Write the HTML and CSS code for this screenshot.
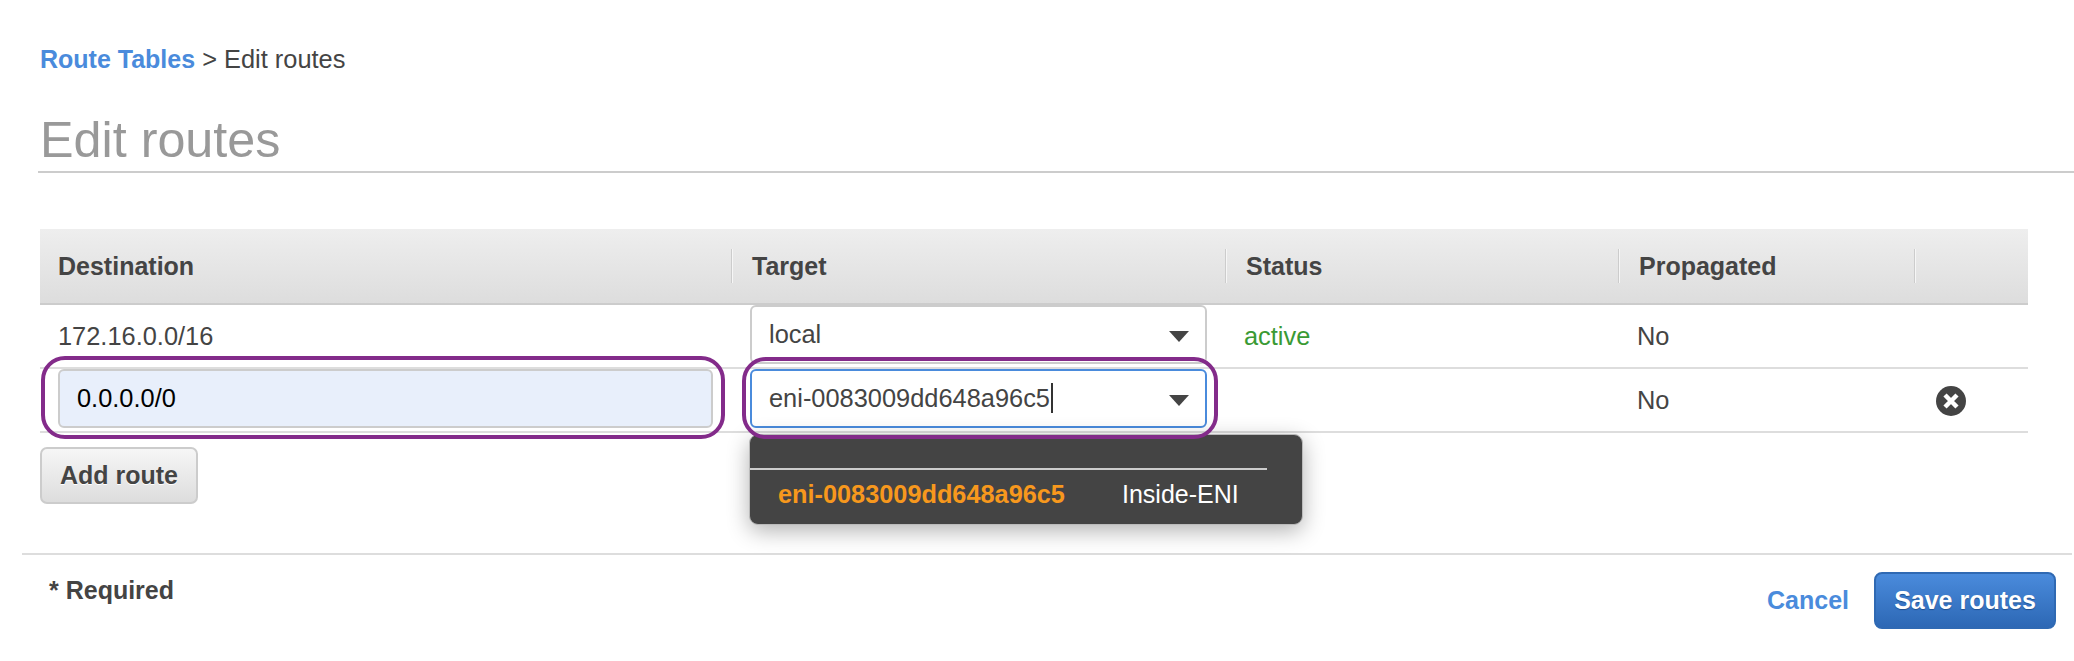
FILE: index.html
```html
<!DOCTYPE html>
<html lang="en">
<head>
  <meta charset="UTF-8" />
  <meta name="viewport" content="width=device-width, initial-scale=1.0" />
  <title>Edit routes</title>
  <link rel="stylesheet" href="styles.css">
</head>
<body>
  <div class="breadcrumb"><a class="link" href="#">Route Tables</a> &gt; Edit routes</div>
  <h1 class="title">Edit routes</h1>

  <div class="routes">
    <div class="row head">
      <div class="cell"><span>Destination</span><i class="sep"></i></div>
      <div class="cell"><span>Target</span><i class="sep"></i></div>
      <div class="cell"><span>Status</span><i class="sep"></i></div>
      <div class="cell"><span>Propagated</span><i class="sep"></i></div>
      <div class="cell"></div>
    </div>

    <div class="row">
      <div class="cell text">172.16.0.0/16</div>
      <div class="cell">
        <div class="select">local<svg class="caret" viewBox="0 0 20 11"><path d="M0 0h20L10 11z"/></svg></div>
      </div>
      <div class="cell text active">active</div>
      <div class="cell text">No</div>
      <div class="cell"></div>
    </div>

    <div class="row">
      <div class="cell">
        <div class="input">0.0.0.0/0<div class="mark mark-dest"></div></div>
      </div>
      <div class="cell">
        <div class="select focused">eni-0083009dd648a96c5<i class="cursor"></i><svg class="caret" viewBox="0 0 20 11"><path d="M0 0h20L10 11z"/></svg>
          <div class="menu">
            <div class="menu-line"></div>
            <div class="menu-item"><b>eni-0083009dd648a96c5</b><span>Inside-ENI</span></div>
          </div>
          <div class="mark mark-target"></div>
        </div>
      </div>
      <div class="cell"></div>
      <div class="cell text">No</div>
      <div class="cell remove">
        <svg class="close" viewBox="0 0 30 30"><circle cx="15" cy="15" r="15" fill="#444"/><path d="M9 9l12 12M21 9L9 21" stroke="#fff" stroke-width="4.5" fill="none"/></svg>
      </div>
    </div>
  </div>

  <button class="btn add">Add route</button>

  <div class="footer">
    <div class="required">* Required</div>
    <div class="actions">
      <a class="link" href="#">Cancel</a>
      <button class="btn save">Save routes</button>
    </div>
  </div>
</body>
</html>
```

FILE: styles.css
```css
body {
  font-family: "Liberation Sans", Arial, sans-serif;
  font-size: 25.4px;
  color: #444;
  background: #fff;
  margin: 0;
  padding: 0;
}

a {
  text-decoration: none;
}

.link {
  color: #4a8bdc;
  font-size: 25px;
  font-weight: bold;
}

.breadcrumb {
  margin: 44px 0 0 40px;
  line-height: 30px;
}

.title {
  margin: 38px 0 0 38px;
  padding: 0 0 8px 2px;
  height: 61px;
  box-sizing: border-box;
  border-bottom: 2px solid #ccc;
  font-size: 50.3px;
  font-weight: normal;
  line-height: 55px;
  color: #999;
}

.routes {
  width: 1988px;
  margin: 56px 0 0 40px;
}

.row {
  display: grid;
  grid-template-columns: 692px 494px 393px 296px 113px;
  height: 64px;
  box-sizing: border-box;
  border-bottom: 2px solid #ddd;
}

.head {
  height: 76px;
  border-bottom: 2px solid #ccc;
  background: linear-gradient(#eee, #ddd);
  font-size: 25px;
  font-weight: bold;
}

.head .cell {
  display: flex;
  align-items: center;
  justify-content: space-between;
  padding-left: 18px;
}

.head .cell:nth-child(n+2) {
  padding-left: 20px;
}

.sep {
  width: 1px;
  height: 34px;
  margin-right: -1px;
  background: #ccc;
  border-right: 1px solid #f6f6f6;
}

.text {
  padding: 16px 0 0 18px;
  line-height: 30px;
}

.active {
  color: #3a9a34;
}

.select {
  position: relative;
  width: 457px;
  height: 59px;
  margin-left: 18px;
  padding: 1px 0 0 17px;
  box-sizing: border-box;
  border: 2px solid #ccc;
  border-radius: 6px;
  background: #fff;
  line-height: 52px;
}

.focused {
  border-color: #4a8bdc;
}

.caret {
  position: absolute;
  right: 16px;
  top: 24px;
  width: 20px;
  height: 11px;
  fill: #444;
}

.cursor {
  display: inline-block;
  width: 2px;
  height: 30px;
  margin-left: 1px;
  vertical-align: -6px;
  background: #333;
}

.input {
  position: relative;
  width: 655px;
  height: 59px;
  margin-left: 18px;
  padding: 1px 0 0 17px;
  box-sizing: border-box;
  border: 2px solid #ccc;
  border-radius: 6px;
  background: #e8effb;
  color: #000;
  line-height: 52px;
}

/* purple annotation outlines */
.mark {
  position: absolute;
  border: 4px solid #832b8a;
  border-radius: 24px;
  pointer-events: none;
}

.mark-dest {
  top: -15px;
  left: -19px;
  right: -14px;
  bottom: -13px;
}

.mark-target {
  top: -14px;
  left: -10px;
  right: -13px;
  bottom: -13px;
}

.menu {
  position: absolute;
  top: 63px;
  left: -3px;
  width: 554px;
  height: 91px;
  box-sizing: border-box;
  padding-top: 33px;
  border: 1px solid #bbb;
  border-radius: 9px;
  background: #444;
  box-shadow: 0 6px 22px rgba(0, 0, 0, 0.3);
  color: #fff;
}

.menu-line {
  width: 517px;
  height: 2px;
  background: #ccc;
}

.menu-item {
  display: flex;
  padding: 9px 0 0 28px;
  font-size: 25px;
  line-height: 30px;
}

.menu-item b {
  width: 344px;
  font-size: 25.3px;
  color: #f7981d;
}

.remove {
  padding: 17px 0 0 21px;
}

.close {
  display: block;
  width: 30px;
  height: 30px;
}

.btn {
  box-sizing: border-box;
  font-family: inherit;
  font-size: 25px;
  font-weight: bold;
  padding: 0;
  cursor: pointer;
}

.add {
  display: block;
  width: 158px;
  height: 57px;
  margin: 14px 0 0 40px;
  border: 2px solid #ccc;
  border-radius: 7px;
  background: linear-gradient(#f6f6f6, #ddd);
  color: #444;
  text-shadow: 0 1px 0 #fff;
}

.footer {
  display: flex;
  justify-content: space-between;
  width: 2050px;
  height: 90px;
  box-sizing: border-box;
  margin: 49px 0 0 22px;
  padding: 17px 16px 0 27px;
  border-top: 2px solid #ddd;
}

.required {
  margin-top: 3px;
  font-size: 25px;
  font-weight: bold;
  line-height: 30px;
}

.actions {
  display: flex;
  align-items: center;
  gap: 25px;
  height: 57px;
}

.save {
  width: 182px;
  height: 57px;
  border: 2px solid #2f69b3;
  border-radius: 8px;
  background: linear-gradient(#4a8bdc, #2d68b5);
  color: #fff;
  text-shadow: 0 1px 1px #1f4f8f;
}
```
